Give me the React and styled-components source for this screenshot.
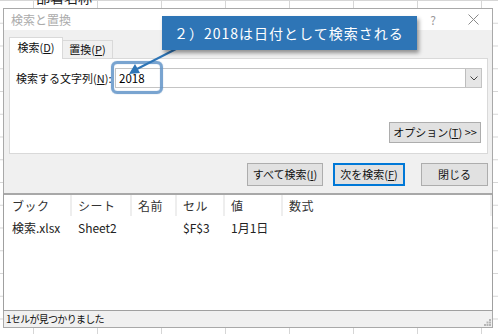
import React from "react";
import styled, { createGlobalStyle } from "styled-components";

const Global = createGlobalStyle`
  html, body { margin: 0; padding: 0; background: #fff; }
  body { font-family: "Noto Sans CJK JP", "Noto Sans", sans-serif; }
  * { box-sizing: border-box; }
`;

const Canvas = styled.div`
  position: relative;
  width: 498px;
  height: 334px;
  overflow: hidden;
  background-color: #fff;
  background-image:
    linear-gradient(to right, #d6d6d6 1px, transparent 1px),
    linear-gradient(to bottom, #d6d6d6 1px, transparent 1px);
  background-size: 64px 100%, 100% 22.75px;
  background-position: 33px 0, 0 0;
`;

const CellText = styled.div`
  position: absolute;
  left: 36px;
  top: -11px;
  font-size: 14px;
  line-height: 16px;
  color: #222;
`;

const Dialog = styled.div`
  position: absolute;
  left: 3px;
  top: 8px;
  width: 490px;
  height: 320px;
  border: 1px solid #a9a9a9;
  background: #f0f0f0;
  display: flex;
  flex-direction: column;
  font-size: 11px;
  color: #111;
`;

const TitleBar = styled.div`
  height: 21px;
  flex: none;
  background: #fff;
  display: flex;
  align-items: center;
  padding-left: 7px;
  color: #ababab;
  font-size: 12px;
  line-height: 14px;
`;

const TitleText = styled.span`
  flex: 1;
`;

const Help = styled.span`
  width: 12px;
  text-align: center;
  color: #9a9a9a;
  font-size: 12px;
  margin-right: 29px;
`;

const CloseX = styled.svg`
  width: 11px;
  height: 11px;
  margin-right: 13px;
`;

const Upper = styled.div`
  height: 163px;
  flex: none;
  padding: 7px 4px 0 5px;
  display: flex;
  flex-direction: column;
`;

const TabRow = styled.div`
  display: flex;
  align-items: flex-end;
  height: 22px;
  margin-bottom: -1px;
  position: relative;
  z-index: 1;
`;

const Tab = styled.div`
  height: ${(p) => (p.$active ? 22 : 19)}px;
  width: ${(p) => p.$w}px;
  background: ${(p) => (p.$active ? "#fff" : "#f0f0f0")};
  border: 1px solid #d9d9d9;
  border-bottom: ${(p) => (p.$active ? "none" : "1px solid #d9d9d9")};
  border-left: ${(p) => (p.$first ? "1px solid #d9d9d9" : "none")};
  display: flex;
  align-items: center;
  justify-content: center;
  font-size: 11px;
  line-height: 13px;
  padding-bottom: ${(p) => (p.$active ? 2 : 0)}px;
`;

const Panel = styled.div`
  height: 96px;
  background: #fff;
  border: 1px solid #d9d9d9;
  padding: 9px 5px 0 6px;
  display: flex;
  flex-direction: column;
`;

const FieldRow = styled.div`
  display: flex;
  align-items: center;
  height: 20px;
`;

const Label = styled.div`
  width: 99px;
  flex: none;
  font-size: 11px;
  line-height: 13px;
  white-space: nowrap;
`;

const Combo = styled.div`
  flex: 1;
  height: 20px;
  border: 1px solid #c4c4c4;
  display: flex;
  align-items: center;
  padding-left: 3px;
  font-size: 11.5px;
  color: #000;
`;

const ComboValue = styled.span`
  flex: 1;
`;

const DropBtn = styled.div`
  width: 16px;
  height: 18px;
  background: #e6e6e6;
  border-left: 1px solid #bdbdbd;
  display: flex;
  align-items: center;
  justify-content: center;
`;

const OptionRow = styled.div`
  display: flex;
  justify-content: flex-end;
  margin-top: 34px;
  padding-right: 1px;
`;

const Button = styled.div`
  width: ${(p) => p.$w}px;
  height: ${(p) => p.$h || 23}px;
  background: #e1e1e1;
  border: ${(p) => (p.$primary ? "2px solid #0078d7" : "1px solid #adadad")};
  display: flex;
  align-items: center;
  justify-content: center;
  font-size: 11px;
  line-height: 13px;
  white-space: nowrap;
  color: #111;
`;

const ButtonRow = styled.div`
  display: flex;
  justify-content: flex-end;
  margin-top: 9px;
`;

const Gap = styled.div`
  width: ${(p) => p.$w}px;
`;

const List = styled.div`
  height: 118px;
  flex: none;
  margin: 0 -1px;
  background: #fff;
  border: 1px solid #a0a0a0;
  border-top: 2px solid #a8a8a8;
  padding-left: 1px;
`;

const Grid = styled.div`
  display: grid;
  grid-template-columns: 67px 60px 45px 48px 58px 1fr;
`;

const HeadCell = styled.div`
  height: 21px;
  display: flex;
  align-items: center;
  padding-left: ${(p) => (p.$first ? 7 : 6)}px;
  border-right: 2px solid #eeeeee;
  font-size: 12px;
  line-height: 14px;
  color: #333;
  letter-spacing: 0.5px;
`;

const Cell = styled.div`
  height: 22px;
  margin-top: 1px;
  display: flex;
  align-items: center;
  padding-left: ${(p) => (p.$first ? 7 : 6)}px;
  font-size: 12px;
  line-height: 14px;
  color: #222;
  white-space: nowrap;
`;

const Status = styled.div`
  flex: 1;
  display: flex;
  align-items: center;
  padding-left: 2px;
  font-size: 10px;
  line-height: 12px;
  letter-spacing: -0.7px;
  color: #111;
  position: relative;
`;

const Grip = styled.svg`
  position: absolute;
  right: 1px;
  bottom: 1px;
  width: 7px;
  height: 7px;
`;

const Callout = styled.div`
  position: absolute;
  left: 162px;
  top: 16px;
  width: 255px;
  height: 34px;
  background: #2e75b6;
  color: #fff;
  font-size: 14px;
  line-height: 16px;
  letter-spacing: 1px;
  display: flex;
  align-items: center;
  padding-left: 12px;
  box-shadow: 2px 3px 4px rgba(0, 0, 0, 0.4);
`;

const Arrow = styled.svg`
  position: absolute;
  left: 120px;
  top: 48px;
  width: 70px;
  height: 32px;
  overflow: visible;
`;

const Highlight = styled.div`
  position: absolute;
  left: 111px;
  top: 61px;
  width: 52px;
  height: 33px;
  border: 3px solid rgba(98, 148, 200, 0.85);
  border-radius: 6px;
  box-shadow: 0 0 1px rgba(60, 110, 170, 0.6), inset 0 0 1px rgba(60, 110, 170, 0.6);
`;

const U = styled.span`
  text-decoration: underline;
`;

export default function App() {
  return (
    <>
      <Global />
      <Canvas>
        <CellText>部署名称</CellText>
        <Dialog>
          <TitleBar>
            <TitleText>検索と置換</TitleText>
            <Help>?</Help>
            <CloseX viewBox="0 0 11 11">
              <path d="M0.5 0.5 L10.5 10.5 M10.5 0.5 L0.5 10.5" stroke="#8a8a8a" strokeWidth="1" fill="none" />
            </CloseX>
          </TitleBar>
          <Upper>
            <TabRow>
              <Tab $active $first $w={54}>
                検索(<U>D</U>)
              </Tab>
              <Tab $w={50}>
                置換(<U>P</U>)
              </Tab>
            </TabRow>
            <Panel>
              <FieldRow>
                <Label>
                  検索する文字列(<U>N</U>):
                </Label>
                <Combo>
                  <ComboValue>2018</ComboValue>
                  <DropBtn>
                    <svg width="8" height="5" viewBox="0 0 8 5">
                      <path d="M0.5 0.5 L4 4 L7.5 0.5" stroke="#444" strokeWidth="1" fill="none" />
                    </svg>
                  </DropBtn>
                </Combo>
              </FieldRow>
              <OptionRow>
                <Button $w={92} $h={21}>
                  オプション(<U>T</U>) &gt;&gt;
                </Button>
              </OptionRow>
            </Panel>
            <ButtonRow>
              <Button $w={76}>
                すべて検索(<U>I</U>)
              </Button>
              <Gap $w={10} />
              <Button $w={72} $primary>
                次を検索(<U>F</U>)
              </Button>
              <Gap $w={16} />
              <Button $w={67}>閉じる</Button>
            </ButtonRow>
          </Upper>
          <List>
            <Grid>
              <HeadCell $first>ブック</HeadCell>
              <HeadCell>シート</HeadCell>
              <HeadCell>名前</HeadCell>
              <HeadCell>セル</HeadCell>
              <HeadCell>値</HeadCell>
              <HeadCell>数式</HeadCell>
              <Cell $first>検索.xlsx</Cell>
              <Cell>Sheet2</Cell>
              <Cell></Cell>
              <Cell>$F$3</Cell>
              <Cell>1月1日</Cell>
              <Cell></Cell>
            </Grid>
          </List>
          <Status>
            1セルが見つかりました
            <Grip viewBox="0 0 7 7">
              <rect x="5" y="0" width="2" height="2" fill="#b5b5b5" />
              <rect x="2.5" y="2.5" width="2" height="2" fill="#b5b5b5" />
              <rect x="5" y="2.5" width="2" height="2" fill="#b5b5b5" />
              <rect x="0" y="5" width="2" height="2" fill="#b5b5b5" />
              <rect x="2.5" y="5" width="2" height="2" fill="#b5b5b5" />
              <rect x="5" y="5" width="2" height="2" fill="#b5b5b5" />
            </Grip>
          </Status>
        </Dialog>
        <Highlight />
        <Arrow viewBox="0 0 70 32">
          <line x1="56" y1="1" x2="17" y2="21" stroke="#2e75b6" strokeWidth="2" />
          <polygon points="9,26 15,16 20,25" fill="#2e75b6" />
        </Arrow>
        <Callout>２）2018は日付として検索される</Callout>
      </Canvas>
    </>
  );
}
